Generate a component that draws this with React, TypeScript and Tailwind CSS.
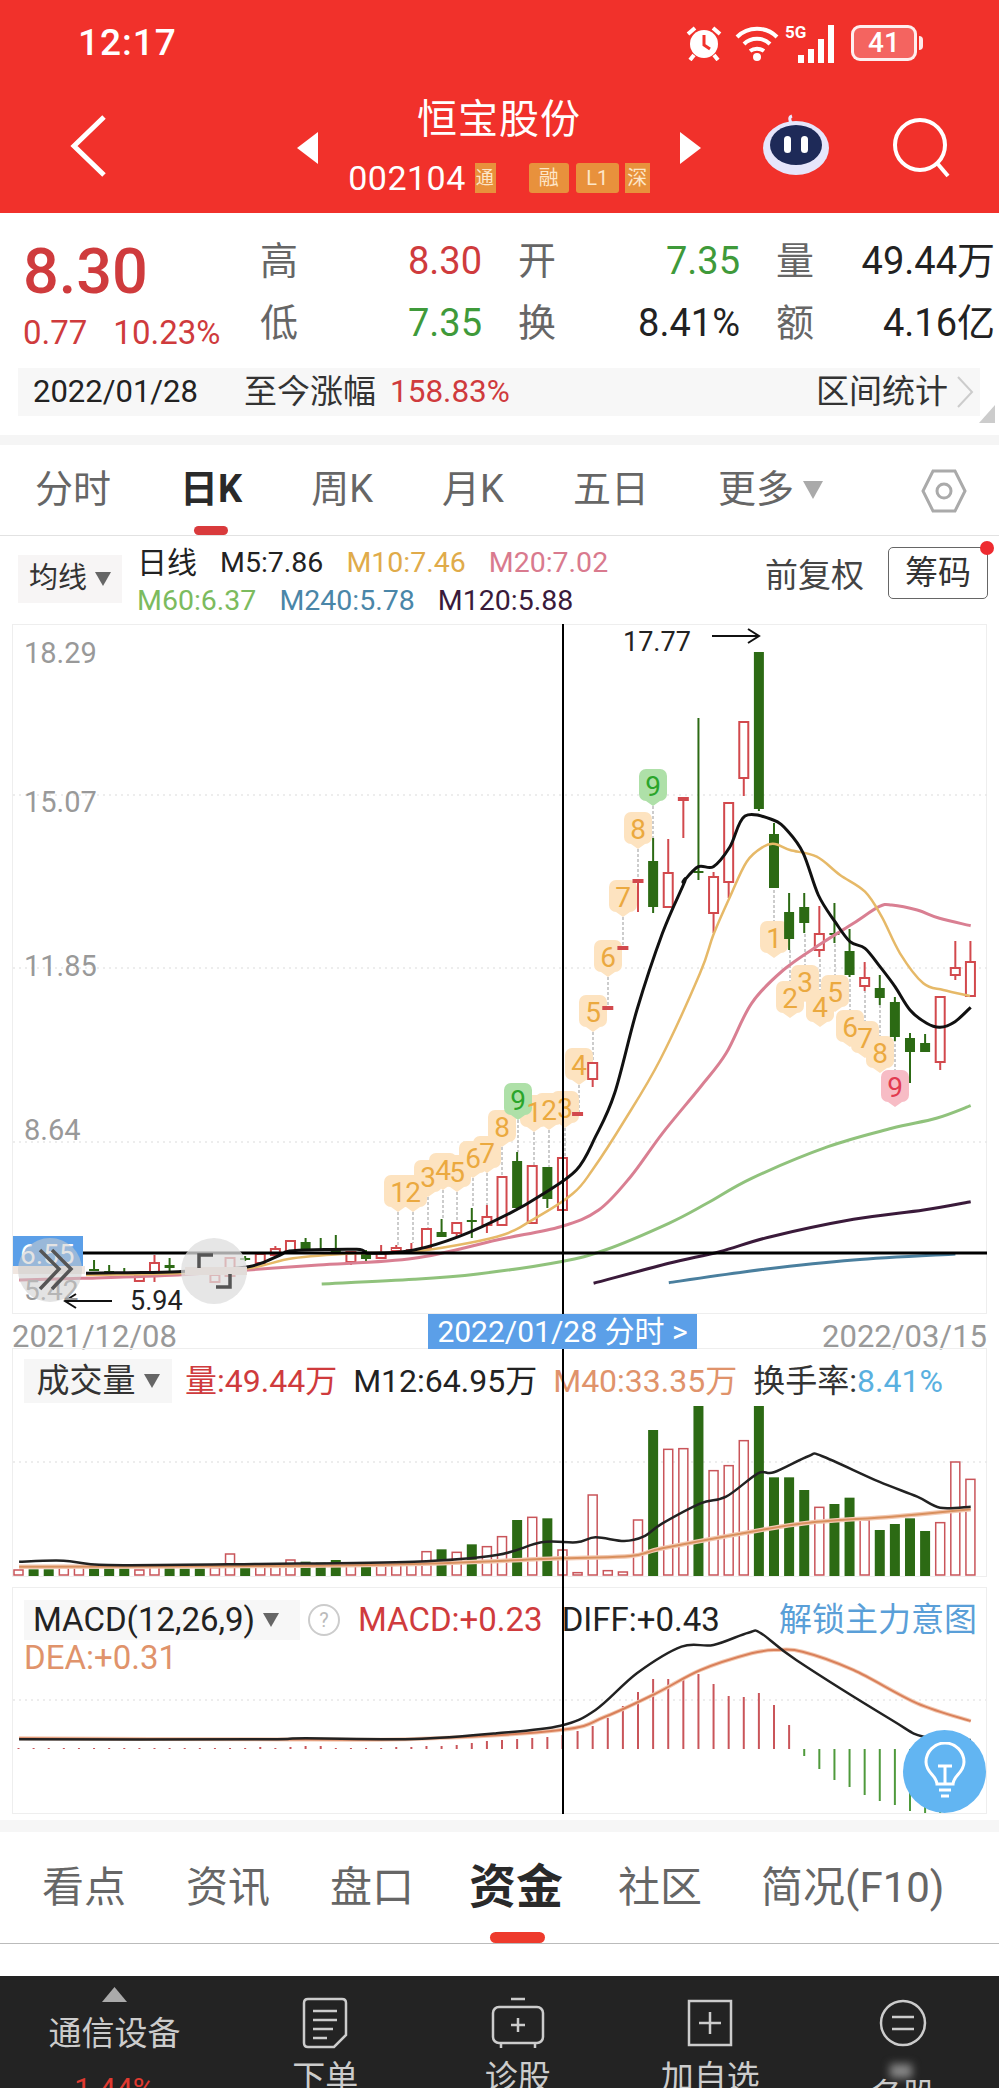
import React from "react";

type Pt = [number, number];

// helpers: points were read off crops of the chart, map them back to page coords
const from3 = (p: Pt[]): Pt[] => p.map(([x, y]) => [x / 1.57, 860 + y / 3]);
const from4 = (p: Pt[]): Pt[] => p.map(([x, y]) => [x / 1.57, 1340 + y / 3]);
const from6 = (p: Pt[]): Pt[] => p.map(([x, y]) => [500 + x / 3, 620 + y / 3]);
const barX = (i: number) => 18.5 + 15.11 * i;

// catmull-rom through the points so the averages don't look faceted
const smooth = (p: Pt[]) => {
  let d = `M${p[0][0].toFixed(1)} ${p[0][1].toFixed(1)}`;
  for (let i = 0; i < p.length - 1; i++) {
    const a = p[i - 1] ?? p[i];
    const b = p[i];
    const c = p[i + 1];
    const e = p[i + 2] ?? c;
    const c1x = b[0] + (c[0] - a[0]) / 6;
    const c1y = b[1] + (c[1] - a[1]) / 6;
    const c2x = c[0] - (e[0] - b[0]) / 6;
    const c2y = c[1] - (e[1] - b[1]) / 6;
    d += `C${c1x.toFixed(1)} ${c1y.toFixed(1)} ${c2x.toFixed(1)} ${c2y.toFixed(1)} ${c[0].toFixed(1)} ${c[1].toFixed(1)}`;
  }
  return d;
};

const m5 = [
  ...from3([[135, 1240], [200, 1238], [280, 1235], [390, 1220], [440, 1185], [460, 1172], [560, 1168], [580, 1180], [650, 1170], [720, 1130], [800, 1060], [850, 1005], [905, 930], [935, 830], [965, 700], [1000, 450], [1040, 220], [1075, 65]]),
  ...from6([[550, 785], [595, 740], [640, 740], [690, 680], [735, 588], [820, 600], [865, 635], [910, 700], [955, 825], [1005, 905], [1050, 965], [1095, 985], [1140, 1040], [1185, 1100], [1230, 1170], [1280, 1210], [1320, 1222], [1365, 1205], [1412, 1162]]),
];
const m10 = [
  ...from3([[135, 1245], [280, 1240], [390, 1225], [460, 1195], [560, 1180], [650, 1175], [780, 1130], [840, 1075], [900, 1000], [930, 930], [981, 780]]),
  ...from6([[480, 1320], [600, 1060], [640, 945], [690, 830], [740, 725], [790, 680], [825, 672], [870, 690], [950, 710], [1020, 765], [1095, 815], [1145, 890], [1200, 1000], [1270, 1090], [1330, 1110], [1410, 1128]]),
];
const m20 = from3([[30, 1260], [130, 1255], [280, 1245], [390, 1230], [500, 1215], [650, 1195], [780, 1140], [880, 1100], [940, 1050], [990, 950], [1040, 820], [1100, 680], [1140, 580], [1180, 430], [1230, 330], [1290, 250], [1340, 190], [1380, 140], [1400, 135], [1440, 150], [1475, 175], [1524, 197]]);
const m60 = from3([[505, 1272], [650, 1258], [750, 1242], [880, 1205], [950, 1170], [1050, 1090], [1110, 1030], [1180, 955], [1300, 860], [1400, 805], [1470, 775], [1524, 737]]);
const m240 = from3([[1050, 1268], [1200, 1228], [1340, 1200], [1500, 1182]]);
const m120 = from3([[932, 1270], [1050, 1210], [1130, 1175], [1210, 1130], [1340, 1078], [1450, 1050], [1524, 1025]]);

// i, colour, wick top, body top, body bottom, wick bottom
const candles: [number, "r" | "g", number, number, number, number][] = [
  [0, "r", 1250, 1250, 1262, 1262], [5, "g", 1260, 1269, 1271, 1271], [6, "g", 1265, 1271, 1272, 1272],
  [7, "g", 1268, 1272, 1273, 1273], [8, "r", 1276, 1276, 1281, 1281], [9, "r", 1255, 1263, 1272, 1282],
  [10, "g", 1258, 1265, 1268, 1272], [13, "r", 1275, 1275, 1282, 1282], [14, "r", 1258, 1258, 1276, 1276],
  [15, "g", 1256, 1258, 1260, 1261], [16, "r", 1254, 1254, 1263, 1263], [17, "r", 1246, 1249, 1255, 1255],
  [18, "r", 1241, 1241, 1252, 1252], [19, "g", 1238, 1242, 1249, 1249], [20, "g", 1238, 1249, 1251, 1251],
  [21, "g", 1235, 1248, 1252, 1252], [22, "r", 1252, 1252, 1262, 1265], [23, "g", 1250, 1253, 1259, 1262],
  [24, "r", 1245, 1253, 1258, 1258], [25, "r", 1245, 1248, 1251, 1251], [26, "r", 1243, 1250, 1252, 1252],
  [27, "r", 1229, 1229, 1248, 1248], [28, "g", 1219, 1232, 1237, 1237], [29, "r", 1223, 1223, 1233, 1237],
  [30, "g", 1208, 1220, 1222, 1238], [31, "r", 1205, 1217, 1225, 1233], [32, "r", 1177, 1177, 1225, 1225],
  [33, "g", 1152, 1161, 1208, 1208], [34, "r", 1166, 1166, 1223, 1223], [35, "g", 1167, 1167, 1199, 1208],
  [36, "r", 1158, 1158, 1210, 1210], [37, "r", 1113, 1113, 1115, 1115], [38, "r", 1063, 1063, 1079, 1087],
  [39, "r", 1007, 1007, 1009, 1009], [40, "r", 947, 947, 949, 949], [41, "r", 880, 880, 882, 912],
  [42, "g", 838, 861, 907, 913], [43, "r", 839, 873, 907, 907], [44, "r", 798, 798, 800, 838],
  [45, "g", 718, 871, 873, 880], [46, "r", 872, 877, 913, 933], [47, "r", 803, 803, 882, 898],
  [48, "r", 722, 722, 778, 796], [49, "g", 652, 652, 809, 811], [50, "g", 823, 834, 888, 888],
  [51, "g", 893, 912, 939, 950], [52, "g", 893, 907, 923, 933], [53, "r", 906, 934, 950, 957],
  [54, "g", 903, 933, 935, 943], [55, "g", 929, 951, 975, 977], [56, "r", 962, 978, 986, 991],
  [57, "g", 975, 988, 998, 1005], [58, "g", 997, 1002, 1037, 1041], [59, "g", 1033, 1038, 1052, 1083],
  [60, "g", 1034, 1043, 1052, 1052], [61, "r", 997, 997, 1062, 1070], [62, "r", 941, 968, 975, 980],
  [63, "r", 941, 962, 996, 996],
];

// label, x, y, where the dashed leader ends, kind
const badges: [string, number, number, number, string][] = [
  ["1", 398, 1192, 1245, "o"], ["2", 413, 1192, 1243, "o"], ["3", 428, 1177, 1229, "o"], ["4", 443, 1170, 1219, "o"],
  ["5", 457, 1172, 1223, "o"], ["6", 473, 1158, 1208, "o"], ["7", 487, 1153, 1205, "o"], ["8", 502, 1127, 1177, "o"],
  ["1", 534, 1112, 1166, "o"], ["2", 549, 1110, 1167, "o"], ["3", 565, 1108, 1158, "o"], ["9", 518, 1100, 1152, "g"],
  ["4", 579, 1065, 1113, "o"], ["5", 593, 1012, 1063, "o"], ["6", 608, 957, 1007, "o"], ["7", 623, 897, 947, "o"],
  ["8", 638, 829, 880, "o"], ["9", 653, 786, 838, "g"],
  ["1", 774, 938, 888, "o"], ["2", 790, 998, 950, "o"], ["3", 805, 982, 933, "o"], ["4", 820, 1007, 957, "o"],
  ["5", 835, 992, 943, "o"], ["6", 850, 1027, 977, "o"], ["7", 865, 1038, 991, "o"], ["8", 880, 1053, 1005, "o"],
  ["9", 895, 1087, 1041, "p"],
];

const volumes: ["r" | "g", number][] = [
  ["r", 690], ["g", 688], ["g", 688], ["r", 683], ["r", 680], ["g", 685], ["g", 685], ["g", 685], ["r", 690], ["r", 680],
  ["g", 685], ["g", 686], ["g", 686], ["r", 683], ["r", 642], ["g", 680], ["r", 678], ["r", 680], ["r", 660], ["g", 665],
  ["g", 668], ["g", 660], ["r", 678], ["g", 680], ["r", 672], ["r", 672], ["r", 670], ["r", 635], ["g", 628], ["r", 637],
  ["g", 613], ["r", 620], ["r", 590], ["g", 540], ["r", 532], ["g", 535], ["r", 630], ["r", 698], ["r", 465], ["r", 692],
  ["r", 696], ["r", 540], ["g", 270], ["r", 328], ["r", 326], ["g", 198], ["r", 392], ["r", 377], ["r", 302], ["g", 198],
  ["g", 412], ["g", 412], ["g", 450], ["r", 502], ["g", 492], ["g", 473], ["r", 540], ["g", 570], ["g", 552], ["g", 535],
  ["g", 573], ["r", 548], ["r", 366], ["r", 418],
];
const m12Vol = from4([[30, 665], [100, 662], [170, 675], [400, 672], [650, 665], [780, 645], [850, 607], [905, 607], [935, 592], [980, 603], [1010, 590], [1040, 550], [1100, 490], [1140, 470], [1190, 400], [1215, 397], [1270, 348], [1290, 348], [1380, 425], [1440, 470], [1476, 503], [1524, 500]]);
const m40Vol = from4([[30, 680], [400, 678], [650, 672], [880, 655], [990, 648], [1040, 625], [1180, 575], [1270, 548], [1400, 530], [1524, 508]]);

const diff = from4([[30, 1198], [400, 1198], [480, 1195], [650, 1197], [780, 1180], [880, 1157], [935, 1110], [1000, 1000], [1070, 920], [1120, 915], [1175, 878], [1195, 880], [1250, 960], [1400, 1140], [1450, 1190], [1524, 1200]]);
const dea = from4([[30, 1195], [400, 1198], [650, 1197], [880, 1170], [950, 1130], [1030, 1060], [1100, 990], [1180, 940], [1220, 930], [1260, 935], [1340, 990], [1440, 1090], [1524, 1143]]);
// histogram height in px per bar, + is up (red), - is down (green)
const macdBars = [1, 1, 1, 1, 1, 1, 1, 1, 1, 1, 1, 1, 1, 1, 1, 1, 2, 1, 2, 3, 3, 1, 1, 1, 1, 2, 2, 3, 3, 4, 6, 8, 9, 10, 11, 12, 14, 18, 23, 31, 43, 57, 70, 70, 70, 75, 65, 53, 52, 56, 44, 24, -7, -20, -31, -38, -46, -52, -56, -62, -65, -65, -50, -33];

const priceLabels: [string, number][] = [["18.29", 653], ["15.07", 802], ["11.85", 966], ["8.64", 1130]];

function Stat({ label, value, color }: { label: string; value: string; color: string }) {
  return (
    <div className="flex items-center justify-between h-[61px]">
      <span className="text-[38px] text-[#666]">{label}</span>
      <span className={`text-[38px] ${color}`}>{value}</span>
    </div>
  );
}

function StatusBar() {
  return (
    <div className="flex items-center h-[86px] pl-[78px] text-white">
      <span className="text-[37px] font-medium tracking-[1px] w-[608px]">12:17</span>
      <svg width="36" height="36" viewBox="0 0 36 36">
        <circle cx="18" cy="19" r="14" fill="white" />
        <path d="M18 10v10l6 4" stroke="#f1312b" strokeWidth="3" fill="none" />
        <path d="M2 9l7-6M34 9l-7-6M8 30l-4 5M28 30l4 5" stroke="white" strokeWidth="4" />
      </svg>
      <svg width="44" height="40" viewBox="0 0 44 40" className="ml-[13px]">
        <path d="M2 14c11-11 29-11 40 0M9 21c7-7 19-7 26 0M15 28c4-3 10-3 14 0" stroke="white" strokeWidth="4" fill="none" />
        <circle cx="22" cy="34" r="4" fill="white" />
      </svg>
      <div className="relative w-[54px] h-[40px] ml-[6px]">
        <span className="absolute left-0 top-[-3px] text-[17px] font-bold">5G</span>
        <svg width="54" height="40" viewBox="0 0 54 40">
          <path d="M16 32v8M26 26v14M36 16v24M46 2v38" stroke="white" strokeWidth="6" />
        </svg>
      </div>
      <div className="flex items-center ml-[12px]">
        <div className="w-[66px] h-[36px] border-[3px] border-white/90 rounded-[9px] bg-white/25 flex items-center justify-center text-[28px] font-medium">
          41
        </div>
        <div className="w-[4px] h-[14px] bg-white/90 rounded-r ml-[2px]" />
      </div>
    </div>
  );
}

function NavBar() {
  return (
    <div className="flex items-start text-white">
      <svg width="40" height="64" viewBox="0 0 40 64" className="ml-[68px] mt-[28px]">
        <path d="M36 3L6 32l30 29" stroke="white" strokeWidth="5" fill="none" />
      </svg>
      <svg width="21" height="32" viewBox="0 0 21 32" className="ml-[189px] mt-[46px]">
        <path d="M21 0v32L0 16z" fill="white" />
      </svg>
      <div className="w-[362px] flex flex-col items-center">
        <div className="text-[40px] leading-[50px] mt-[9px] tracking-[1px]">恒宝股份</div>
        <div className="flex items-center mt-[17px] h-[32px]">
          <span className="text-[34px] leading-none tracking-[0.5px]">002104</span>
          <span className="ml-[9px] w-[21px] h-[30px] bg-[#e8913c] overflow-hidden text-[18px] leading-[30px] text-[#fde6c8]">
            <span className="block w-[30px] -ml-[5px] text-center">通</span>
          </span>
          <span className="ml-[33px] w-[40px] h-[30px] rounded-[3px] bg-[#e8913c] text-center text-[20px] leading-[30px] text-[#fde6c8]">融</span>
          <span className="ml-[7px] w-[43px] h-[30px] rounded-[3px] bg-[#e8913c] text-center text-[20px] leading-[30px] text-[#fde6c8]">L1</span>
          <span className="ml-[6px] w-[25px] h-[30px] bg-[#e8913c] overflow-hidden text-center text-[20px] leading-[30px] text-[#fde6c8]">深</span>
        </div>
      </div>
      <svg width="21" height="32" viewBox="0 0 21 32" className="mt-[46px]">
        <path d="M0 0v32l21-16z" fill="white" />
      </svg>
      <svg width="68" height="62" viewBox="0 0 68 62" className="ml-[61px] mt-[28px]">
        <path d="M30 10c-3-4-3-7 0-8" stroke="#e8e8ff" strokeWidth="3" fill="none" />
        <ellipse cx="34" cy="34" rx="33" ry="27" fill="#e6e6fb" />
        <ellipse cx="34" cy="31" rx="26" ry="20" fill="#1e2a58" />
        <rect x="22" y="22" width="7" height="17" rx="3.5" fill="white" />
        <rect x="39" y="22" width="7" height="17" rx="3.5" fill="white" />
      </svg>
      <svg width="62" height="60" viewBox="0 0 62 60" className="ml-[62px] mt-[32px]">
        <circle cx="28" cy="27" r="25" stroke="white" strokeWidth="4" fill="none" />
        <path d="M45 45l11 13" stroke="white" strokeWidth="4" />
      </svg>
    </div>
  );
}

function Quote() {
  return (
    <div className="h-[222px] relative">
      <div className="flex pt-[18px]">
        <div className="w-[260px] pl-[23px]">
          <div className="text-[63px] leading-[76px] mt-[3px] text-[#cf3b3d] font-medium">8.30</div>
          <div className="text-[33px] leading-[44px] mt-[1px] text-[#cf3b3d]">
            <span>0.77</span>
            <span className="ml-[26px]">10.23%</span>
          </div>
        </div>
        <div className="grid grid-cols-[222px_222px_219px] gap-x-[36px]">
          <Stat label="高" value="8.30" color="text-[#cf3b3d]" />
          <Stat label="开" value="7.35" color="text-[#3f9a3a]" />
          <Stat label="量" value="49.44万" color="text-[#222]" />
          <Stat label="低" value="7.35" color="text-[#3f9a3a]" />
          <Stat label="换" value="8.41%" color="text-[#222]" />
          <Stat label="额" value="4.16亿" color="text-[#222]" />
        </div>
      </div>
      <div className="absolute left-[18px] top-[155px] w-[962px] h-[48px] bg-[#f7f7f7] flex items-center pl-[15px]">
        <span className="text-[31px] text-[#222]">2022/01/28</span>
        <span className="text-[33px] text-[#333] ml-[46px]">至今涨幅</span>
        <span className="text-[31.5px] text-[#cf3b3d] ml-[14px]">158.83%</span>
        <span className="text-[33px] text-[#333] ml-auto">区间统计</span>
        <svg width="20" height="34" viewBox="0 0 20 34" className="ml-[7px] mr-[5px]">
          <path d="M3 2l14 15L3 32" stroke="#ccc" strokeWidth="2" fill="none" />
        </svg>
      </div>
      <svg width="16" height="18" viewBox="0 0 16 18" className="absolute left-[979px] top-[192px]">
        <path d="M16 0v18H0z" fill="#ccc" />
      </svg>
    </div>
  );
}

function ChartTabs() {
  return (
    <div className="relative h-[91px] border-b border-[#e2e2e2] flex items-center gap-[69px] pl-[35px] pb-[1px] text-[38px] text-[#666]">
      <span>分时</span>
      <span className="font-bold text-[#2a2a2a]">日K</span>
      <span>周K</span>
      <span>月K</span>
      <span>五日</span>
      <span className="flex items-center">
        更多
        <svg width="20" height="18" viewBox="0 0 20 18" className="ml-[9px]">
          <path d="M0 0h20L10 18z" fill="#aaa" />
        </svg>
      </span>
      <svg width="46" height="44" viewBox="0 0 46 44" className="absolute left-[921px] top-[24px]">
        <path d="M12 2h22l10 20-10 20H12L2 22z" stroke="#aaa" strokeWidth="3" fill="none" />
        <circle cx="23" cy="22" r="7" stroke="#aaa" strokeWidth="3" fill="none" />
      </svg>
      <div className="absolute left-[194px] bottom-0 w-[34px] h-[9px] rounded-full bg-[#d93a3c]" />
    </div>
  );
}

function Toolbar() {
  return (
    <div className="relative h-[88px] flex">
      <div className="ml-[18px] mt-[19px] w-[104px] h-[48px] bg-[#f7f5f5] flex items-center justify-center gap-[8px] text-[29px] text-[#333]">
        均线
        <svg width="16" height="14" viewBox="0 0 16 14"><path d="M0 0h16L8 14z" fill="#666" /></svg>
      </div>
      <div className="ml-[15px] text-[28.5px] leading-[38px] mt-[8px]">
        <div className="flex gap-[23px] whitespace-nowrap">
          <span className="text-[#222] text-[30px]">日线</span>
          <span className="text-[#222]">M5:7.86</span>
          <span className="text-[#e0ab4a]">M10:7.46</span>
          <span className="text-[#d97a8e]">M20:7.02</span>
        </div>
        <div className="flex gap-[23px] whitespace-nowrap">
          <span className="text-[#7cbb5e]">M60:6.37</span>
          <span className="text-[#4a86a8]">M240:5.78</span>
          <span className="text-[#3a1a3a]">M120:5.88</span>
        </div>
      </div>
      <span className="absolute left-[765px] top-[15px] text-[33px] text-[#444]">前复权</span>
      <div className="absolute left-[888px] top-[11px] w-[100px] h-[52px] border border-[#666] rounded-[5px] flex items-center justify-center text-[33px] text-[#333]">
        筹码
        <div className="absolute -right-[7px] -top-[7px] w-[14px] h-[14px] rounded-full bg-[#ee2b30]" />
      </div>
    </div>
  );
}

function MainChart() {
  const bgOf = (kind: string) => (kind === "g" ? "#aee0a8" : kind === "p" ? "#f7bcc5" : "#fde3c0");
  const fgOf = (kind: string) => (kind === "g" ? "#2aa52a" : kind === "p" ? "#e23a50" : "#eba93f");
  return (
    <div className="mx-[12px] h-[690px] border border-[#eee] relative">
      <svg viewBox="13 625 974 688" className="block w-[974px] h-[688px]">
        {[795, 968, 1142].map((y) => (
          <line key={y} x1="13" x2="987" y1={y} y2={y} stroke="#e8e8e8" strokeWidth="1.5" strokeDasharray="2 4" />
        ))}
        {priceLabels.map(([t, y]) => (
          <text key={t} x="24" y={y + 10} fontSize="29" fill="#999">{t}</text>
        ))}
        <path d={smooth(m240)} fill="none" stroke="#4a7f9e" strokeWidth="3" />
        <path d={smooth(m120)} fill="none" stroke="#3a1a3a" strokeWidth="3" />
        <path d={smooth(m60)} fill="none" stroke="#90c27c" strokeWidth="3" />
        {badges.map(([t, x, y, to], i) => (
          <line key={i} x1={x} x2={x} y1={y} y2={to} stroke="#999" strokeWidth="1" strokeDasharray="3 2" />
        ))}
        {/* badges go under the candles and averages, the orange ones blur together */}
        {badges.map(([, x, y, , kind], i) => (
          <g key={i}>
            <rect x={x - 14} y={y - 17} width="28" height="32" rx="7" fill={bgOf(kind)} />
            <path d={`M${x - 7} ${y + 15}h14l-7 5z`} fill={bgOf(kind)} />
          </g>
        ))}
        {badges.map(([t, x, y, , kind], i) => (
          <text key={i} x={x} y={y + 10} fontSize="28" textAnchor="middle" fill={fgOf(kind)}>{t}</text>
        ))}
        {candles.map(([i, c, wt, bt, bb, wb]) => {
          const x = barX(i);
          const col = c === "r" ? "#d2494d" : "#2c6a14";
          return (
            <g key={i}>
              <line x1={x} x2={x} y1={wt} y2={wb} stroke={col} strokeWidth="2" />
              {c === "g" ? (
                <rect x={x - 5} y={bt} width="10" height={bb - bt} fill={col} />
              ) : (
                <rect x={x - 4.5} y={bt} width="9" height={Math.max(bb - bt, 1)} fill="white" stroke={col} strokeWidth="2" />
              )}
            </g>
          );
        })}
        <path d={smooth(m20)} fill="none" stroke="#d97f92" strokeWidth="3" />
        <path d={smooth(m10)} fill="none" stroke="#e6b968" strokeWidth="2.5" />
        <path d={smooth(m5)} fill="none" stroke="#111" strokeWidth="3" />
        <line x1="83" x2="987" y1="1253" y2="1253" stroke="#000" strokeWidth="3" />
        <text x="623" y="651" fontSize="27" fill="#222">17.77</text>
        <path d="M712 636h46m-10-7l11 7-11 7" stroke="#111" strokeWidth="2" fill="none" />
        <text x="130" y="1310" fontSize="27" fill="#222">5.94</text>
        <path d="M112 1301H66m10-7l-11 7 11 7" stroke="#111" strokeWidth="2" fill="none" />
        <rect x="13" y="1236" width="70" height="36" fill="#5b9fe8" />
        <text x="20" y="1264" fontSize="28" fill="white">6.55</text>
        <text x="24" y="1300" fontSize="28" fill="#999">5.42</text>
        <rect x="13" y="1266" width="72" height="8" fill="#f0e6e0" />
        <rect x="185" y="1267" width="62" height="8" fill="#f0d8cc" />
        <circle cx="50" cy="1270" r="32" fill="#ccc" opacity="0.55" />
        <path d="M40 1250l19 19-19 20M52 1250l19 19-19 20" stroke="#555" strokeWidth="3.5" fill="none" />
        <circle cx="214" cy="1271" r="33" fill="#ddd" opacity="0.75" />
        <path d="M199 1268v-13h14M230 1274v13h-14" stroke="#555" strokeWidth="3.5" fill="none" />
      </svg>
    </div>
  );
}

function DateRow() {
  return (
    <div className="relative h-[34px] flex justify-between px-[12px] text-[31px] leading-[46px] text-[#999]">
      <span>2021/12/08</span>
      <div className="absolute z-10 left-[428px] top-0 w-[269px] h-[35px] bg-[#5b9fe8] text-white text-[30px] leading-[35px] text-center whitespace-nowrap">
        2022/01/28 分时 &gt;
      </div>
      <span>2022/03/15</span>
    </div>
  );
}

function VolumePane() {
  return (
    <div className="mx-[12px] h-[229px] border border-[#eee] relative">
      <div className="flex items-center h-[54px] pt-[9px] pl-[11px] text-[32px] whitespace-nowrap">
        <div className="w-[148px] h-[44px] bg-[#f6f6f6] flex items-center justify-center gap-[8px] text-[33px] text-[#333]">
          成交量
          <svg width="16" height="14" viewBox="0 0 16 14"><path d="M0 0h16L8 14z" fill="#666" /></svg>
        </div>
        <span className="ml-[13px] text-[#cf3b3d]">量:49.44万</span>
        <span className="ml-[16px] text-[#222]">M12:64.95万</span>
        <span className="ml-[16px] text-[#e0936b]">M40:33.35万</span>
        <span className="ml-[16px] text-[#333]">换手率:</span>
        <span className="text-[#5ab0e0]">8.41%</span>
      </div>
      <svg viewBox="13 1403 974 173" className="block w-[974px] h-[173px]">
        <line x1="13" x2="987" y1="1462" y2="1462" stroke="#e8e8e8" strokeWidth="1.5" strokeDasharray="2 4" />
        {volumes.map(([c, top], i) => {
          const y = 1340 + top / 3;
          const x = barX(i);
          return c === "g" ? (
            <rect key={i} x={x - 5} y={y} width="10" height={1576 - y} fill="#2c6a14" />
          ) : (
            <rect key={i} x={x - 4.5} y={y} width="9" height={1575 - y} fill="white" stroke="#c9555a" strokeWidth="1.5" />
          );
        })}
        <path d={smooth(m40Vol)} fill="none" stroke="#f3c9b2" strokeWidth="4.5" />
        <path d={smooth(m40Vol)} fill="none" stroke="#d9905e" strokeWidth="2" />
        <path d={smooth(m12Vol)} fill="none" stroke="#222" strokeWidth="2.5" />
      </svg>
    </div>
  );
}

function MacdPane() {
  return (
    <div className="mx-[12px] h-[227px] border border-[#eee] relative overflow-hidden">
      <svg viewBox="13 1588 974 225" className="absolute inset-0 w-[974px] h-[225px]">
        <line x1="13" x2="987" y1="1700" y2="1700" stroke="#e8e8e8" strokeWidth="1.5" strokeDasharray="2 4" />
        {macdBars.map((h, i) => {
          const x = barX(i);
          return (
            <line key={i} x1={x} x2={x} y1={1749} y2={1749 - h} stroke={h >= 0 ? "#c9555a" : "#4f9a3c"} strokeWidth="2" />
          );
        })}
        <path d={smooth(dea)} fill="none" stroke="#f3c9b2" strokeWidth="4" />
        <path d={smooth(dea)} fill="none" stroke="#d9805a" strokeWidth="2" />
        <path d={smooth(diff)} fill="none" stroke="#222" strokeWidth="2.5" />
      </svg>
      <div className="relative flex items-center pt-[12px] pl-[11px] text-[33px] leading-[40px] whitespace-nowrap">
        <div className="w-[276px] h-[40px] bg-[#f7f7f7] flex items-center gap-[8px] pl-[9px] text-[#222]">
          MACD(12,26,9)
          <svg width="16" height="14" viewBox="0 0 16 14"><path d="M0 0h16L8 14z" fill="#666" /></svg>
        </div>
        <div className="ml-[8px] w-[32px] h-[32px] rounded-full border-2 border-[#ccc] flex items-center justify-center text-[20px] text-[#bbb]">?</div>
        <span className="ml-[18px] text-[#cf3b3d]">MACD:+0.23</span>
        <span className="ml-[19px] text-[#222]">DIFF:+0.43</span>
        <span className="ml-auto mr-[9px] text-[33px] text-[#5a9fd8]">解锁主力意图</span>
      </div>
      <div className="relative pl-[11px] text-[33px] leading-[36px] text-[#e0936b]">DEA:+0.31</div>
    </div>
  );
}

function InfoTabs() {
  return (
    <div className="relative h-[112px] border-b border-[#bbb] flex items-center gap-[59px] pl-[42px] text-[42px] text-[#666]">
      <span>看点</span>
      <span className="ml-[1px]">资讯</span>
      <span className="ml-[1px]">盘口</span>
      <span className="text-[47px] font-bold text-[#2a2a2a] -mx-[4px]">资金</span>
      <span>社区</span>
      <span>简况(F10)</span>
      <div className="absolute left-[490px] bottom-0 w-[55px] h-[11px] rounded-full bg-[#ee3a2c]" />
    </div>
  );
}

function BottomBar() {
  return (
    <div className="mt-[32px] h-[112px] bg-[#232323] overflow-hidden grid grid-cols-[229px_repeat(4,192.5px)] text-[#ccc] text-[33px]">
      <div className="flex flex-col items-center pt-[11px]">
        <svg width="25" height="15" viewBox="0 0 25 15"><path d="M12.5 0L25 15H0z" fill="#aaa" /></svg>
        <div className="mt-[10px] leading-[44px]">通信设备</div>
        <div className="mt-[13px] text-[30px] text-[#e03a30] leading-[40px]">1.44%</div>
      </div>
      <div className="flex flex-col items-center pt-[21px]">
        <svg width="46" height="52" viewBox="0 0 46 52" fill="none" stroke="#ccc" strokeWidth="2.5">
          <path d="M6 2h34q4 0 4 4v32L32 50H6q-4 0-4-4V6q0-4 4-4z" />
          <path d="M11 14h24M11 23h24M11 32h20M11 41h14" />
        </svg>
        <div className="leading-[44px] mt-[7px]">下单</div>
      </div>
      <div className="flex flex-col items-center pt-[21px]">
        <svg width="54" height="52" viewBox="0 0 54 52" fill="none" stroke="#ccc" strokeWidth="2.5">
          <path d="M20 2h14" />
          <rect x="2" y="10" width="50" height="36" rx="6" />
          <path d="M27 21v14M20 28h14M10 46v5M44 46v5" />
        </svg>
        <div className="leading-[44px] mt-[7px]">诊股</div>
      </div>
      <div className="flex flex-col items-center pt-[23px]">
        <svg width="46" height="48" viewBox="0 0 46 48" fill="none" stroke="#ccc" strokeWidth="2.5">
          <rect x="2" y="2" width="42" height="44" />
          <path d="M23 13v22M12 24h22" />
        </svg>
        <div className="leading-[44px] mt-[9px]">加自选</div>
      </div>
      <div className="relative flex flex-col items-center pt-[23px]">
        <svg width="48" height="48" viewBox="0 0 48 48" fill="none" stroke="#ccc" strokeWidth="2.5">
          <ellipse cx="24" cy="24" rx="22" ry="22" />
          <path d="M13 18h22M13 30h22" />
        </svg>
        <div className="leading-[44px] mt-[27px]">名股</div>
        {/* smudged patch over this label in the capture */}
        <div className="absolute left-[83px] top-[88px] w-[22px] h-[14px] bg-[#888] blur-[4px]" />
      </div>
    </div>
  );
}

export default function App() {
  return (
    <div className="relative w-[999px] h-[2088px] overflow-hidden bg-white font-['Roboto','Noto_Sans_CJK_SC',sans-serif]">
      <div className="h-[213px] bg-[#f1312b]">
        <StatusBar />
        <NavBar />
      </div>
      <Quote />
      <div className="h-[10px] bg-[#f5f5f5]" />
      <ChartTabs />
      <Toolbar />
      <MainChart />
      <DateRow />
      <VolumePane />
      <div className="h-[10px]" />
      <MacdPane />
      <div className="h-[6px]" />
      <div className="h-[12px] bg-[#f6f6f6]" />
      <InfoTabs />
      <BottomBar />

      {/* crosshair runs through all three panes */}
      <div className="absolute left-[562px] top-[624px] w-[2px] h-[1190px] bg-black" />

      {/* floating hint button */}
      <div className="absolute left-[903px] top-[1730px] w-[83px] h-[83px] rounded-full bg-[#62b5f2] flex items-center justify-center">
        <svg width="44" height="60" viewBox="0 0 44 60" fill="none" stroke="white" strokeWidth="3">
          <path d="M14 42c0-8-11-11-11-22a19 19 0 0138 0c0 11-11 14-11 22z" />
          <path d="M15 24h14M22 24v18M16 48h12M18 54h8" />
        </svg>
      </div>
    </div>
  );
}
